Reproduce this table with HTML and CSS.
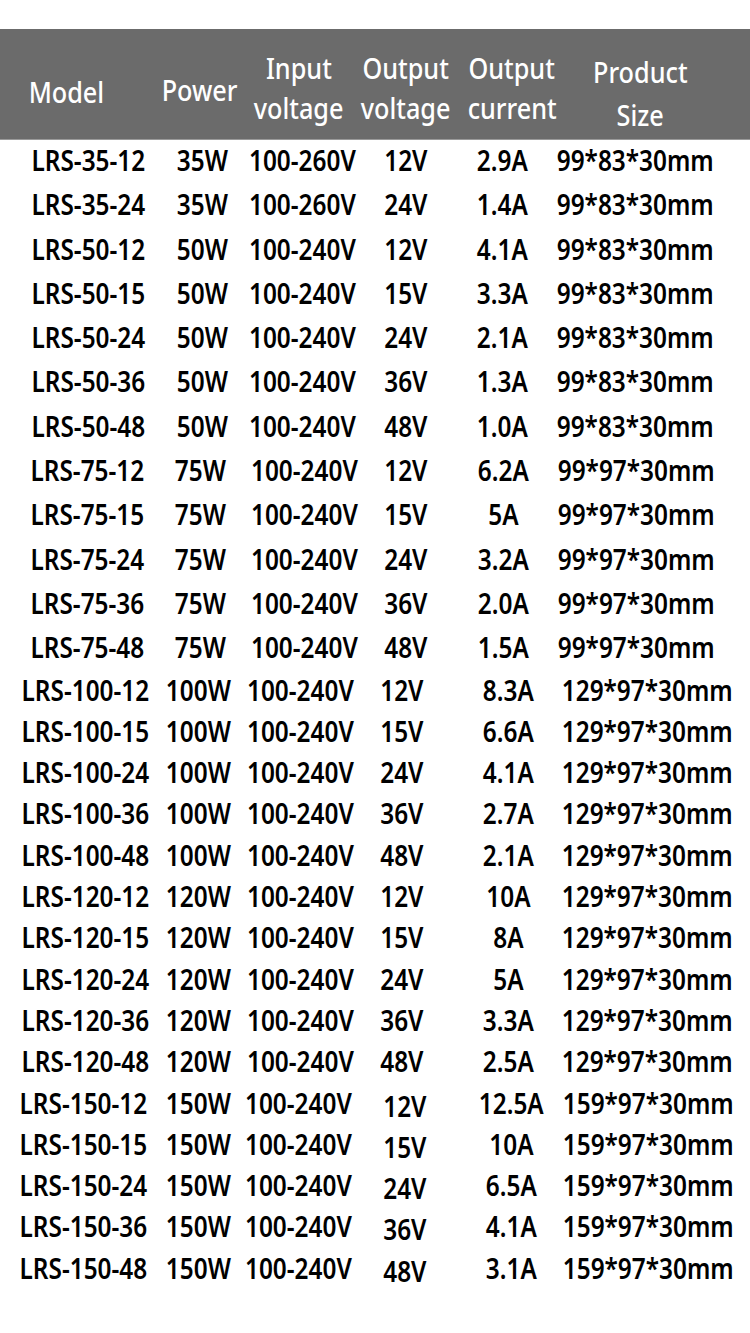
FILE: index.html
```html
<!DOCTYPE html>
<html lang="en">
<head>
<meta charset="utf-8">
<title>LRS power supply specifications</title>
<link rel="stylesheet" href="styles.css">
</head>
<body>
<div class="sheet">
  <div class="head">
    <div class="hc one model"><span>Model</span></div>
    <div class="hc one power"><span>Power</span></div>
    <div class="hc two"><span>Input</span><span>voltage</span></div>
    <div class="hc two"><span>Output</span><span>voltage</span></div>
    <div class="hc two"><span>Output</span><span>current</span></div>
    <div class="hc two size"><span>Product</span><span>Size</span></div>
  </div>
  <div class="tbody">
    <div class="grp g1">
      <div class="row"><div class="c"><span>LRS-35-12</span></div><div class="c"><span>35W</span></div><div class="c"><span>100-260V</span></div><div class="c"><span>12V</span></div><div class="c"><span>2.9A</span></div><div class="c"><span>99*83*30mm</span></div></div>
      <div class="row"><div class="c"><span>LRS-35-24</span></div><div class="c"><span>35W</span></div><div class="c"><span>100-260V</span></div><div class="c"><span>24V</span></div><div class="c"><span>1.4A</span></div><div class="c"><span>99*83*30mm</span></div></div>
      <div class="row"><div class="c"><span>LRS-50-12</span></div><div class="c"><span>50W</span></div><div class="c"><span>100-240V</span></div><div class="c"><span>12V</span></div><div class="c"><span>4.1A</span></div><div class="c"><span>99*83*30mm</span></div></div>
      <div class="row"><div class="c"><span>LRS-50-15</span></div><div class="c"><span>50W</span></div><div class="c"><span>100-240V</span></div><div class="c"><span>15V</span></div><div class="c"><span>3.3A</span></div><div class="c"><span>99*83*30mm</span></div></div>
      <div class="row"><div class="c"><span>LRS-50-24</span></div><div class="c"><span>50W</span></div><div class="c"><span>100-240V</span></div><div class="c"><span>24V</span></div><div class="c"><span>2.1A</span></div><div class="c"><span>99*83*30mm</span></div></div>
      <div class="row"><div class="c"><span>LRS-50-36</span></div><div class="c"><span>50W</span></div><div class="c"><span>100-240V</span></div><div class="c"><span>36V</span></div><div class="c"><span>1.3A</span></div><div class="c"><span>99*83*30mm</span></div></div>
      <div class="row"><div class="c"><span>LRS-50-48</span></div><div class="c"><span>50W</span></div><div class="c"><span>100-240V</span></div><div class="c"><span>48V</span></div><div class="c"><span>1.0A</span></div><div class="c"><span>99*83*30mm</span></div></div>
    </div>
    <div class="grp g2">
      <div class="row"><div class="c"><span>LRS-75-12</span></div><div class="c"><span>75W</span></div><div class="c"><span>100-240V</span></div><div class="c"><span>12V</span></div><div class="c"><span>6.2A</span></div><div class="c"><span>99*97*30mm</span></div></div>
      <div class="row"><div class="c"><span>LRS-75-15</span></div><div class="c"><span>75W</span></div><div class="c"><span>100-240V</span></div><div class="c"><span>15V</span></div><div class="c"><span>5A</span></div><div class="c"><span>99*97*30mm</span></div></div>
      <div class="row"><div class="c"><span>LRS-75-24</span></div><div class="c"><span>75W</span></div><div class="c"><span>100-240V</span></div><div class="c"><span>24V</span></div><div class="c"><span>3.2A</span></div><div class="c"><span>99*97*30mm</span></div></div>
      <div class="row"><div class="c"><span>LRS-75-36</span></div><div class="c"><span>75W</span></div><div class="c"><span>100-240V</span></div><div class="c"><span>36V</span></div><div class="c"><span>2.0A</span></div><div class="c"><span>99*97*30mm</span></div></div>
      <div class="row"><div class="c"><span>LRS-75-48</span></div><div class="c"><span>75W</span></div><div class="c"><span>100-240V</span></div><div class="c"><span>48V</span></div><div class="c"><span>1.5A</span></div><div class="c"><span>99*97*30mm</span></div></div>
    </div>
    <div class="grp g3">
      <div class="row"><div class="c"><span>LRS-100-12</span></div><div class="c"><span>100W</span></div><div class="c"><span>100-240V</span></div><div class="c"><span>12V</span></div><div class="c"><span>8.3A</span></div><div class="c"><span>129*97*30mm</span></div></div>
      <div class="row"><div class="c"><span>LRS-100-15</span></div><div class="c"><span>100W</span></div><div class="c"><span>100-240V</span></div><div class="c"><span>15V</span></div><div class="c"><span>6.6A</span></div><div class="c"><span>129*97*30mm</span></div></div>
      <div class="row"><div class="c"><span>LRS-100-24</span></div><div class="c"><span>100W</span></div><div class="c"><span>100-240V</span></div><div class="c"><span>24V</span></div><div class="c"><span>4.1A</span></div><div class="c"><span>129*97*30mm</span></div></div>
      <div class="row"><div class="c"><span>LRS-100-36</span></div><div class="c"><span>100W</span></div><div class="c"><span>100-240V</span></div><div class="c"><span>36V</span></div><div class="c"><span>2.7A</span></div><div class="c"><span>129*97*30mm</span></div></div>
      <div class="row"><div class="c"><span>LRS-100-48</span></div><div class="c"><span>100W</span></div><div class="c"><span>100-240V</span></div><div class="c"><span>48V</span></div><div class="c"><span>2.1A</span></div><div class="c"><span>129*97*30mm</span></div></div>
      <div class="row"><div class="c"><span>LRS-120-12</span></div><div class="c"><span>120W</span></div><div class="c"><span>100-240V</span></div><div class="c"><span>12V</span></div><div class="c"><span>10A</span></div><div class="c"><span>129*97*30mm</span></div></div>
      <div class="row"><div class="c"><span>LRS-120-15</span></div><div class="c"><span>120W</span></div><div class="c"><span>100-240V</span></div><div class="c"><span>15V</span></div><div class="c"><span>8A</span></div><div class="c"><span>129*97*30mm</span></div></div>
      <div class="row"><div class="c"><span>LRS-120-24</span></div><div class="c"><span>120W</span></div><div class="c"><span>100-240V</span></div><div class="c"><span>24V</span></div><div class="c"><span>5A</span></div><div class="c"><span>129*97*30mm</span></div></div>
      <div class="row"><div class="c"><span>LRS-120-36</span></div><div class="c"><span>120W</span></div><div class="c"><span>100-240V</span></div><div class="c"><span>36V</span></div><div class="c"><span>3.3A</span></div><div class="c"><span>129*97*30mm</span></div></div>
      <div class="row"><div class="c"><span>LRS-120-48</span></div><div class="c"><span>120W</span></div><div class="c"><span>100-240V</span></div><div class="c"><span>48V</span></div><div class="c"><span>2.5A</span></div><div class="c"><span>129*97*30mm</span></div></div>
    </div>
    <div class="grp g4">
      <div class="row"><div class="c"><span>LRS-150-12</span></div><div class="c"><span>150W</span></div><div class="c"><span>100-240V</span></div><div class="c dn"><span>12V</span></div><div class="c"><span>12.5A</span></div><div class="c"><span>159*97*30mm</span></div></div>
      <div class="row"><div class="c"><span>LRS-150-15</span></div><div class="c"><span>150W</span></div><div class="c"><span>100-240V</span></div><div class="c dn"><span>15V</span></div><div class="c"><span>10A</span></div><div class="c"><span>159*97*30mm</span></div></div>
      <div class="row"><div class="c"><span>LRS-150-24</span></div><div class="c"><span>150W</span></div><div class="c"><span>100-240V</span></div><div class="c dn"><span>24V</span></div><div class="c"><span>6.5A</span></div><div class="c"><span>159*97*30mm</span></div></div>
      <div class="row"><div class="c"><span>LRS-150-36</span></div><div class="c"><span>150W</span></div><div class="c"><span>100-240V</span></div><div class="c dn"><span>36V</span></div><div class="c"><span>4.1A</span></div><div class="c"><span>159*97*30mm</span></div></div>
      <div class="row"><div class="c"><span>LRS-150-48</span></div><div class="c"><span>150W</span></div><div class="c"><span>100-240V</span></div><div class="c dn"><span>48V</span></div><div class="c"><span>3.1A</span></div><div class="c"><span>159*97*30mm</span></div></div>
    </div>
  </div>
</div>
</body>
</html>
```
FILE: styles.css
```css
* { box-sizing: border-box; }
html, body { margin: 0; padding: 0; background: #fff; }
body {
  width: 750px;
  height: 1333px;
  overflow: hidden;
  font-family: "Noto Sans", "Open Sans", "DejaVu Sans", sans-serif;
}
.sheet { padding-top: 29px; }

.head {
  height: 111px;
  background: #6b6b6b;
  border-bottom: 1px solid #9a9a9a;
  color: #fff;
  display: grid;
  grid-template-columns: 128px 140px 58px 156px 56px 200px;
  padding-left: 2px;
  padding-bottom: 3px;
  align-items: end;
  font-size: 29px;
  font-weight: 500;
  line-height: 40px;
}
.hc {
  display: flex;
  flex-direction: column;
  align-items: center;
  white-space: nowrap;
  padding-bottom: 8px;
}
.hc span { transform: scaleX(0.87); }
.hc.model { padding-bottom: 24px; }
.hc.power { padding-bottom: 26px; }
.hc.size { line-height: 43px; padding-bottom: 0; }

.tbody {
  margin-top: -2px;
  font-size: 28px;
  font-weight: 600;
  color: #000;
}
.row {
  display: grid;
  white-space: nowrap;
}
.c {
  display: flex;
  justify-content: center;
}
.c span { transform: scaleX(0.87); }
.g1 .row, .g2 .row { height: 44.3px; line-height: 44.3px; }
.g3 .row, .g4 .row { height: 41.3px; line-height: 41.3px; }

.g1 .row { padding-left: 26px; grid-template-columns: 124px 104px 96px 112px 80px 186px; }
.g2 .row { padding-left: 24px; grid-template-columns: 126px 100px 108px 96px 98px 168px; }
.g3 .row { padding-left: 20px; grid-template-columns: 130px 96px 108px 96px 116px 162px; }
.g4 .row { padding-left: 16px; grid-template-columns: 134px 96px 104px 110px 102px 172px; }

.c.dn { padding-top: 3px; }
```
